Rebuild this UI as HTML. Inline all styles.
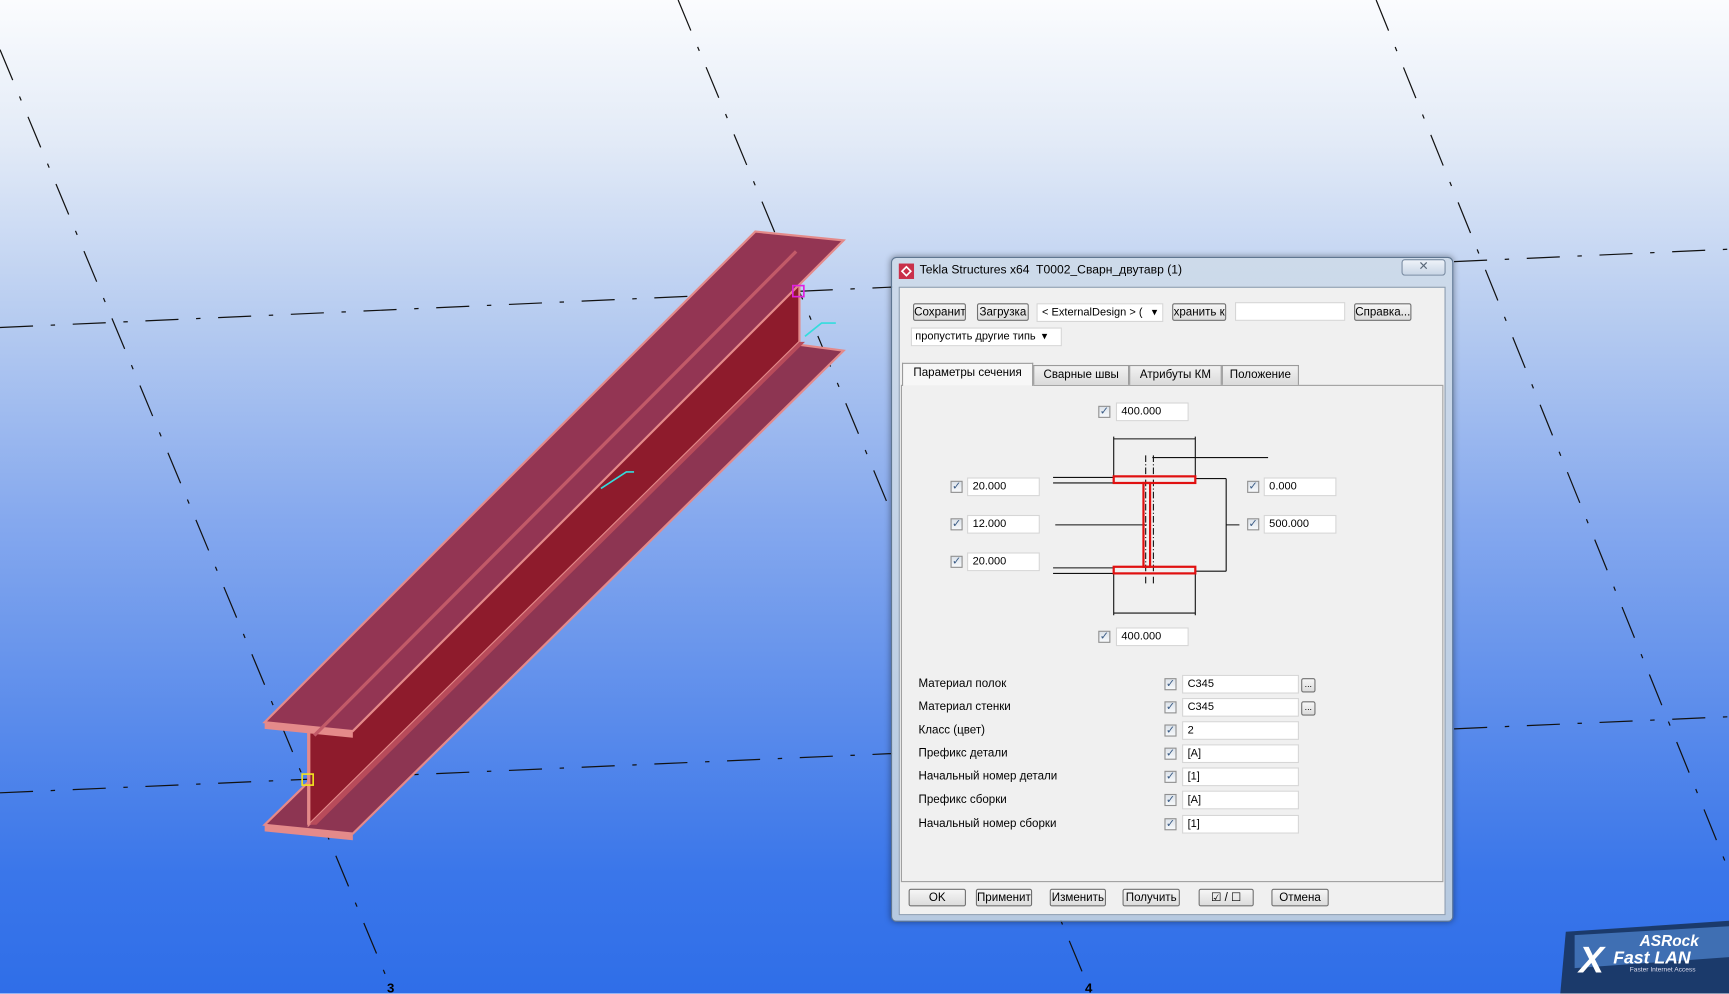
<!DOCTYPE html>
<html><head><meta charset="utf-8">
<style>
html,body{margin:0;padding:0;width:1729px;height:994px;overflow:hidden;}
#w{position:absolute;left:0;top:0;width:1568px;height:901px;transform:scale(1.10268);transform-origin:0 0;
background:linear-gradient(180deg,#fbfcfe 0%,#e3ebf7 14%,#b4caf0 33%,#86a9ee 52%,#5b8ceb 72%,#3a76ea 88%,#2f6ee8 100%);
font-family:"Liberation Sans","DejaVu Sans",sans-serif;font-size:10.5px;color:#000;}
.a{position:absolute;}
.dlg{left:808px;top:233px;width:510px;height:603px;background:linear-gradient(180deg,#cddaea,#b6c9e0);border:1px solid #5f7691;border-radius:5px;box-sizing:border-box;box-shadow:0 0 6px rgba(0,0,0,.4);}
.in{left:815px;top:260px;width:496px;height:570px;background:#f0f0f0;border:1px solid #8a9bb0;box-sizing:border-box;}
.btn{position:absolute;height:16px;line-height:15px;background:linear-gradient(#f6f6f6,#dcdcdc);border:1px solid #707070;border-radius:2px;box-sizing:border-box;text-align:center;overflow:hidden;white-space:nowrap;font-size:10.5px;}
.tb{position:absolute;height:17px;background:#fff;border:1px solid #d6d6d6;box-sizing:border-box;padding-left:4px;line-height:15px;font-size:10px;}
.cb{position:absolute;width:11px;height:11px;border:1px solid #8f8f8f;background:linear-gradient(#dde3ea,#f7f9fb);box-sizing:border-box;font-size:10px;line-height:9px;text-align:center;color:#3b5c86;}
.tab{position:absolute;top:331px;height:18px;line-height:17px;background:linear-gradient(#f2f2f2,#dadada);border:1px solid #9a9a9a;border-bottom:none;box-sizing:border-box;text-align:center;font-size:10.5px;}
.lbl{position:absolute;left:833px;font-size:10.5px;}
</style></head><body>
<div id="w">
<svg class="a" style="left:0;top:0" width="1568" height="901" viewBox="0 0 1568 901">
<g stroke="#111" stroke-width="1.1" fill="none" stroke-dasharray="30 16 4 16">
<line x1="0" y1="45" x2="352" y2="890"/>
<line x1="615" y1="0" x2="985" y2="890"/>
<line x1="1248" y1="0" x2="1568" y2="790"/>
<line x1="0" y1="297" x2="1568" y2="226"/>
<line x1="0" y1="719" x2="1568" y2="650"/>
</g>
<!-- beam -->
<polygon points="240,748 690,308 765,318 320,756" fill="#8d3552" stroke="#e48a8a" stroke-width="2"/>
<polygon points="280,663 725,218 725,310 280,748" fill="#8e1b2c" stroke="#e48a8a" stroke-width="2"/>
<polygon points="280,748 725,310 730,310 287,748" fill="#b84b5a"/>
<polygon points="240,655 685,210 765,218 320,663" fill="#933553" stroke="#e48a8a" stroke-width="2"/>
<polygon points="240,655 320,663 320,669 240,661" fill="#e48a8a"/>
<polygon points="240,748 320,756 320,762 240,754" fill="#e48a8a"/>
<line x1="280" y1="663" x2="280" y2="748" stroke="#e48a8a" stroke-width="3"/>
<line x1="285" y1="667" x2="722" y2="228" stroke="#c25a68" stroke-width="3"/>
<polyline points="545,443 568,428 575,428" stroke="#33dddd" stroke-width="1.5" fill="none"/>
<polyline points="730,305 745,293 758,293" stroke="#33dddd" stroke-width="1.5" fill="none"/>
<rect x="719" y="259" width="10" height="10" fill="none" stroke="#e020e0" stroke-width="1.5"/>
<rect x="274" y="702" width="10" height="10" fill="none" stroke="#f0e020" stroke-width="1.5"/>
<text x="351" y="900" font-size="12" font-weight="bold" font-family="Liberation Sans">3</text>
<text x="984" y="900" font-size="12" font-weight="bold" font-family="Liberation Sans">4</text>
<!-- asrock -->
<path d="M1420,845 L1568,835 L1568,901 L1415,901 Z" fill="#1b3a6b"/>
<path d="M1428,848 L1568,840 L1568,868 L1428,878 Z" fill="#3f6fb3"/>
<text x="1432" y="882" font-size="34" font-weight="bold" font-style="italic" fill="#fff" font-family="Liberation Sans">X</text>
<text x="1487" y="858" font-size="14" font-weight="bold" font-style="italic" fill="#fff" font-family="Liberation Sans">ASRock</text>
<text x="1463" y="874" font-size="16" font-weight="bold" font-style="italic" fill="#fff" font-family="Liberation Sans">Fast LAN</text>
<text x="1478" y="881" font-size="6" fill="#dde" font-family="Liberation Sans">Faster Internet Access</text>
</svg>

<div class="a dlg"></div>
<svg class="a" style="left:815px;top:239px" width="14" height="14" viewBox="0 0 14 14"><rect width="14" height="14" fill="#c9304a"/><path d="M3 7 L7 3 L11 7 L7 11 Z" fill="none" stroke="#fff" stroke-width="1.5"/></svg>
<div class="a" style="left:834px;top:239px;font-size:11px;">Tekla Structures x64&nbsp; T0002_Сварн_двутавр (1)</div>
<div class="a" style="left:1271px;top:235px;width:40px;height:15px;border:1px solid #7c8ea4;border-radius:3px;background:linear-gradient(#eef3f9,#c9d6e6);box-sizing:border-box;text-align:center;line-height:13px;color:#5a6878;font-size:11px;">✕</div>
<div class="a in"></div>

<div class="btn" style="left:828px;top:275px;width:48px;">Сохранить</div>
<div class="btn" style="left:886px;top:275px;width:47px;">Загрузка</div>
<div class="tb" style="left:940px;top:275px;width:115px;">&lt; ExternalDesign &gt; (&nbsp;&nbsp;&nbsp;▾</div>
<div class="btn" style="left:1063px;top:275px;width:49px;">хранить к</div>
<div class="tb" style="left:1120px;top:274px;width:100px;"></div>
<div class="btn" style="left:1228px;top:275px;width:52px;">Справка...</div>
<div class="tb" style="left:826px;top:297px;width:137px;padding-left:3px;">пропустить другие типь&nbsp; ▾</div>

<div class="a" style="left:817px;top:349px;width:492px;height:451px;border:1px solid #a0a0a0;box-sizing:border-box;"></div>
<div class="tab" style="left:818px;top:329px;height:21px;width:119px;background:#f7f7f7;">Параметры сечения</div>
<div class="tab" style="left:937px;width:87px;">Сварные швы</div>
<div class="tab" style="left:1024px;width:84px;">Атрибуты КМ</div>
<div class="tab" style="left:1108px;width:70px;">Положение</div>

<div class="cb" style="left:996px;top:368px;">✓</div><div class="tb" style="left:1012px;top:365px;width:66px;">400.000</div>
<div class="cb" style="left:862px;top:436px;">✓</div><div class="tb" style="left:877px;top:433px;width:66px;">20.000</div>
<div class="cb" style="left:862px;top:470px;">✓</div><div class="tb" style="left:877px;top:467px;width:66px;">12.000</div>
<div class="cb" style="left:862px;top:504px;">✓</div><div class="tb" style="left:877px;top:501px;width:66px;">20.000</div>
<div class="cb" style="left:1131px;top:436px;">✓</div><div class="tb" style="left:1146px;top:433px;width:66px;">0.000</div>
<div class="cb" style="left:1131px;top:470px;">✓</div><div class="tb" style="left:1146px;top:467px;width:66px;">500.000</div>
<div class="cb" style="left:996px;top:572px;">✓</div><div class="tb" style="left:1012px;top:569px;width:66px;">400.000</div>

<svg class="a" style="left:950px;top:390px" width="200" height="180" viewBox="950 390 200 180">
<g stroke="#111" stroke-width="1" fill="none">
<line x1="1010" y1="398" x2="1084" y2="398"/><line x1="1010" y1="396" x2="1010" y2="432"/><line x1="1084" y1="396" x2="1084" y2="432"/>
<line x1="1010" y1="556" x2="1084" y2="556"/><line x1="1010" y1="520" x2="1010" y2="558"/><line x1="1084" y1="520" x2="1084" y2="558"/>
<line x1="1045" y1="415" x2="1185" y2="415"/><line x1="1185" y1="415" x2="1185" y2="430"/>
<line x1="1039" y1="413" x2="1039" y2="530" stroke-dasharray="6 2 1 2"/><line x1="1046" y1="413" x2="1046" y2="530" stroke-dasharray="6 2 1 2"/>
<line x1="955" y1="433" x2="1010" y2="433"/><line x1="955" y1="438" x2="1010" y2="438"/>
<line x1="955" y1="515" x2="1010" y2="515"/><line x1="955" y1="520" x2="1010" y2="520"/>
<line x1="957" y1="476" x2="1040" y2="476"/>
<line x1="1084" y1="434" x2="1112" y2="434"/><line x1="1084" y1="518" x2="1112" y2="518"/><line x1="1112" y1="434" x2="1112" y2="518"/><line x1="1112" y1="476" x2="1124" y2="476"/>
</g>
<g fill="none" stroke="#e01010" stroke-width="2">
<rect x="1010" y="432" width="74" height="6"/><rect x="1010" y="514" width="74" height="6"/><rect x="1037" y="438" width="6" height="76"/>
</g>
</svg>

<div class="lbl" style="top:614px;">Материал полок</div>
<div class="lbl" style="top:635px;">Материал стенки</div>
<div class="lbl" style="top:656px;">Класс (цвет)</div>
<div class="lbl" style="top:677px;">Префикс детали</div>
<div class="lbl" style="top:698px;">Начальный номер детали</div>
<div class="lbl" style="top:719px;">Префикс сборки</div>
<div class="lbl" style="top:741px;">Начальный номер сборки</div>
<div class="cb" style="left:1056px;top:615px;">✓</div><div class="tb" style="left:1072px;top:612px;width:106px;">C345</div>
<div class="cb" style="left:1056px;top:636px;">✓</div><div class="tb" style="left:1072px;top:633px;width:106px;">C345</div>
<div class="cb" style="left:1056px;top:657px;">✓</div><div class="tb" style="left:1072px;top:654px;width:106px;">2</div>
<div class="cb" style="left:1056px;top:678px;">✓</div><div class="tb" style="left:1072px;top:675px;width:106px;">[A]</div>
<div class="cb" style="left:1056px;top:699px;">✓</div><div class="tb" style="left:1072px;top:696px;width:106px;">[1]</div>
<div class="cb" style="left:1056px;top:720px;">✓</div><div class="tb" style="left:1072px;top:717px;width:106px;">[A]</div>
<div class="cb" style="left:1056px;top:742px;">✓</div><div class="tb" style="left:1072px;top:739px;width:106px;">[1]</div>
<div class="btn" style="left:1180px;top:615px;width:13px;height:13px;line-height:10px;font-size:8px;">...</div>
<div class="btn" style="left:1180px;top:636px;width:13px;height:13px;line-height:10px;font-size:8px;">...</div>

<div class="btn" style="left:824px;top:806px;width:52px;">OK</div>
<div class="btn" style="left:885px;top:806px;width:51px;">Применить</div>
<div class="btn" style="left:952px;top:806px;width:51px;">Изменить</div>
<div class="btn" style="left:1018px;top:806px;width:52px;">Получить</div>
<div class="btn" style="left:1087px;top:806px;width:50px;">☑ / ☐</div>
<div class="btn" style="left:1153px;top:806px;width:52px;">Отмена</div>
</div>
</body></html>
